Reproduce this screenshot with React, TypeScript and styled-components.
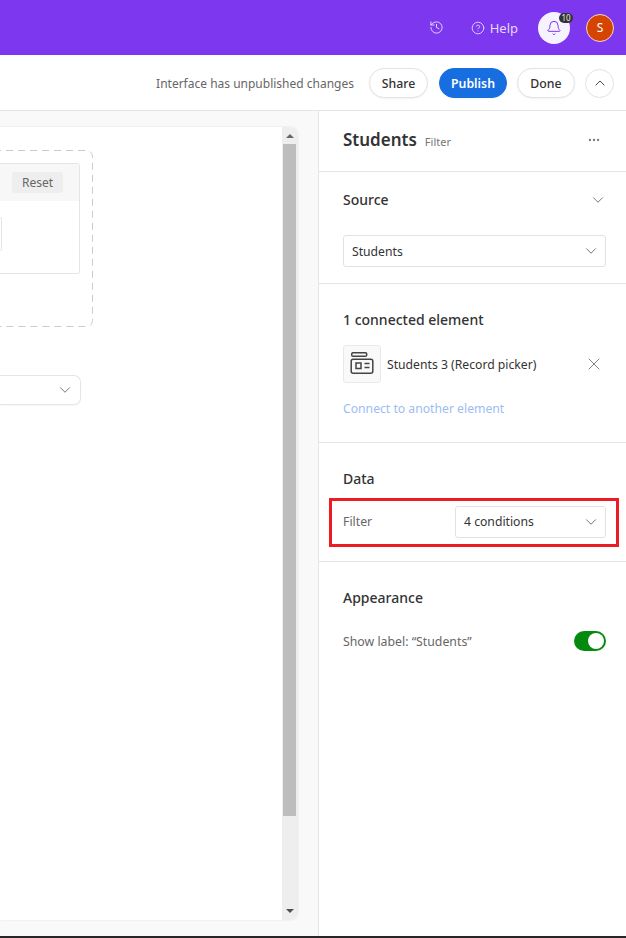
import * as React from 'react'
import styled, { createGlobalStyle } from 'styled-components'
import { Bell, ChevronDown, ChevronUp, CircleHelp, History, MoreHorizontal, X } from 'lucide-react'

const GlobalStyle = createGlobalStyle`
  html, body {
    margin: 0;
    padding: 0;
    overflow: hidden;
    background: #fff;
  }
  body {
    font-family: 'Noto Sans', 'Open Sans', sans-serif;
    color: #333;
  }
`

const Page = styled.div`
  width: 626px;
  height: 938px;
  display: flex;
  flex-direction: column;
  overflow: hidden;
`
const TopBar = styled.header`
  height: 55px;
  flex: none;
  background: #7c37ef;
  display: flex;
  justify-content: flex-end;
  align-items: center;
  padding-right: 12px;
  color: #e6d9fc;
`
const HistoryButton = styled.div`
  display: flex;
  margin-right: 27px;
`
const HelpLink = styled.div`
  display: flex;
  align-items: center;
  gap: 5px;
  font-size: 13px;
  margin-right: 20px;
`
const BellButton = styled.div`
  position: relative;
  width: 32px;
  height: 32px;
  border-radius: 50%;
  background: #f7f2ff;
  color: #7c37ef;
  display: flex;
  align-items: center;
  justify-content: center;
  margin-right: 16px;
`
const Badge = styled.span`
  position: absolute;
  top: 1px;
  right: -3px;
  width: 14px;
  height: 10px;
  border-radius: 5px;
  background: #333;
  color: #eee;
  font-size: 8px;
  line-height: 10px;
  text-align: center;
`
const Avatar = styled.div`
  width: 26px;
  height: 26px;
  border-radius: 50%;
  border: 1px solid #f3d9cc;
  background: #d54401;
  color: #fff;
  font-size: 12px;
  display: flex;
  align-items: center;
  justify-content: center;
`
const Toolbar = styled.div`
  height: 56px;
  flex: none;
  box-sizing: border-box;
  border-bottom: 1px solid #e5e5e5;
  display: flex;
  justify-content: flex-end;
  align-items: center;
  padding: 1px 12px 0 0;
`
const Notice = styled.span`
  font-size: 12px;
  color: #666;
  margin-right: 15px;
`
const PillButton = styled.button<{ $primary?: boolean; $width: number; $gap: number }>`
  width: ${p => p.$width}px;
  height: 30px;
  padding: 0;
  border-radius: 15px;
  border: 1px solid ${p => (p.$primary ? '#166ee1' : '#e2e2e2')};
  background: ${p => (p.$primary ? '#166ee1' : '#fff')};
  color: ${p => (p.$primary ? '#fff' : '#333')};
  font-family: inherit;
  font-size: 12.3px;
  font-weight: ${p => (p.$primary ? 600 : 500)};
  margin-right: ${p => p.$gap}px;
  box-shadow: 0 1px 2px rgba(0, 0, 0, 0.05);
`
const CircleButton = styled.button`
  width: 29px;
  height: 29px;
  padding: 0;
  border-radius: 50%;
  border: 1px solid #e2e2e2;
  background: #fff;
  color: #444;
  display: flex;
  align-items: center;
  justify-content: center;
`
const Workspace = styled.div`
  flex: 1;
  min-height: 0;
  display: flex;
`
const Canvas = styled.main`
  width: 318px;
  flex: none;
  box-sizing: border-box;
  background: #f9f9f9;
  padding: 16px 20px 16px 0;
  display: flex;
  flex-direction: column;
`
const Sheet = styled.div`
  height: 793px;
  background: #fff;
  border-radius: 0 8px 8px 0;
  box-shadow: 0 0 2px rgba(0, 0, 0, 0.12);
  display: flex;
  overflow: hidden;
`
const SheetBody = styled.div`
  flex: 1;
  min-width: 0;
  padding-top: 23px;
`
const DropZone = styled.div`
  position: relative;
  width: 93px;
  height: 177px;
  box-sizing: border-box;
  padding: 13px 13px 0 0;
`
const DashedOutline = styled.svg`
  position: absolute;
  top: 0;
  left: 0;
  width: 93px;
  height: 177px;
`
const FilterCard = styled.div`
  height: 111px;
  box-sizing: border-box;
  background: #fff;
  border: 1px solid #e5e5e5;
  border-left: none;
  border-radius: 0 3px 3px 0;
`
const CardHead = styled.div`
  height: 37px;
  background: #f7f7f7;
  display: flex;
  justify-content: flex-end;
  align-items: center;
  padding-right: 16px;
`
const ResetButton = styled.div`
  width: 51px;
  height: 21px;
  border-radius: 3px;
  background: #eeeeee;
  color: #666;
  font-size: 12px;
  line-height: 21px;
  text-align: center;
`
const CardInput = styled.div`
  width: 1px;
  height: 32px;
  margin-top: 16px;
  border: 1px solid #e5e5e5;
  border-left: none;
  border-radius: 0 2px 2px 0;
`
const PickerStub = styled.div`
  width: 81px;
  height: 30px;
  box-sizing: border-box;
  margin-top: 48px;
  border: 1px solid #e5e5e5;
  border-left: none;
  border-radius: 0 7px 7px 0;
  box-shadow: 0 1px 2px rgba(0, 0, 0, 0.04);
  display: flex;
  justify-content: flex-end;
  align-items: center;
  padding-right: 6px;
  color: #666;
`
const Scrollbar = styled.div`
  width: 16px;
  flex: none;
  box-sizing: border-box;
  padding-right: 1px;
  background: #eeeeee;
  display: flex;
  flex-direction: column;
  align-items: center;
`
const ArrowUp = styled.div`
  flex: none;
  margin: 7px 0 6px;
  width: 0;
  height: 0;
  border-left: 4px solid transparent;
  border-right: 4px solid transparent;
  border-bottom: 4px solid #666;
`
const ArrowDown = styled.div`
  flex: none;
  margin: 93px 0 0;
  width: 0;
  height: 0;
  border-left: 4px solid transparent;
  border-right: 4px solid transparent;
  border-top: 4px solid #505050;
`
const Thumb = styled.div`
  width: 13px;
  height: 672px;
  flex: none;
  background: #bdbdbd;
`
const Panel = styled.aside`
  flex: 1;
  min-width: 0;
  border-left: 1px solid #e5e5e5;
  display: flex;
  flex-direction: column;
`
const Section = styled.section<{ $height: number }>`
  height: ${p => p.$height}px;
  flex: none;
  box-sizing: border-box;
  padding: 0 20px 0 24px;
  border-bottom: 1px solid #e5e5e5;
`
const LastSection = styled.section`
  flex: 1;
  padding: 0 20px 0 24px;
`
const PanelHead = styled.div`
  display: flex;
  align-items: baseline;
  padding-top: 17px;
`
const PanelTitle = styled.h1`
  margin: 0;
  font-size: 17px;
  line-height: 24px;
  font-weight: 600;
  color: #333;
`
const PanelKind = styled.span`
  margin-left: 8px;
  font-size: 11px;
  color: #777;
  flex: 1;
`
const MoreIcon = styled.span`
  align-self: center;
  display: flex;
  color: #777;
  margin-right: 5px;
`
const SectionRow = styled.div<{ $top: number }>`
  display: flex;
  align-items: center;
  justify-content: space-between;
  padding-top: ${p => p.$top}px;
`
const SectionTitle = styled.h2`
  margin: 0;
  font-size: 14px;
  line-height: 22px;
  font-weight: 500;
  color: #333;
`
const Select = styled.div<{ $width?: number }>`
  width: ${p => (p.$width ? `${p.$width}px` : 'auto')};
  height: 32px;
  box-sizing: border-box;
  background: #fff;
  border: 1px solid #e2e2e2;
  border-radius: 3px;
  padding: 0 5px 0 8px;
  display: flex;
  justify-content: space-between;
  align-items: center;
  font-size: 12.2px;
  color: #333;
`
const SourceSelect = styled(Select)`
  margin-top: 24px;
`
const SelectArrow = styled.span`
  display: flex;
  color: #666;
`
const SourceToggle = styled(SelectArrow)`
  margin-right: -1px;
`
const ElementRow = styled.div`
  display: flex;
  align-items: center;
  margin-top: 14px;
`
const ElementIcon = styled.div`
  width: 38px;
  height: 38px;
  box-sizing: border-box;
  border: 1px solid #e8e8e8;
  border-radius: 3px;
  background: #f9f9f9;
  display: flex;
  align-items: center;
  justify-content: center;
`
const ElementName = styled.span`
  margin-left: 6px;
  flex: 1;
  font-size: 12.2px;
  color: #333;
`
const RemoveIcon = styled.span`
  display: flex;
  color: #666;
  margin-right: 2px;
`
const ConnectLink = styled.div`
  margin-top: 17px;
  font-size: 12.2px;
  color: #9cbdf2;
`
const FilterRow = styled.div`
  margin: 8px -13px 0 -14px;
  height: 49px;
  box-sizing: border-box;
  border: 3px solid #ed1c24;
  display: flex;
  align-items: center;
  justify-content: space-between;
  padding: 0 10px 2px 11px;
`
const FieldLabel = styled.span`
  font-size: 12.3px;
  color: #666;
`
const ToggleRow = styled.div`
  display: flex;
  align-items: center;
  justify-content: space-between;
  margin-top: 22px;
`
const Toggle = styled.div`
  width: 32px;
  height: 20px;
  box-sizing: border-box;
  border-radius: 10px;
  background: #048a0e;
  padding: 2px;
  display: flex;
  justify-content: flex-end;
`
const Knob = styled.div`
  width: 16px;
  height: 16px;
  border-radius: 50%;
  background: #fff;
`
const BottomEdge = styled.div`
  height: 2px;
  flex: none;
  background: #2b2426;
`

const RecordPickerIcon = () => (
  <svg width="24" height="24" viewBox="0 0 24 24" fill="none" stroke="#444" strokeWidth="1.5">
    <rect x="1.7" y="0.7" width="15" height="3.6" rx="1.4" />
    <rect x="1.2" y="7.2" width="21.6" height="14" rx="2" />
    <rect x="6" y="11" width="5" height="5.5" />
    <path d="M14.5 11.5h5M14.5 15.5h5" />
  </svg>
)

const Chevron = () => <ChevronDown size={18} strokeWidth={1.2} />

export default function App() {
  return (
    <Page>
      <GlobalStyle />
      <TopBar>
        <HistoryButton>
          <History size={15} strokeWidth={1.6} />
        </HistoryButton>
        <HelpLink>
          <CircleHelp size={14} strokeWidth={1.5} />
          Help
        </HelpLink>
        <BellButton>
          <Bell size={16} strokeWidth={1.5} />
          <Badge>10</Badge>
        </BellButton>
        <Avatar>S</Avatar>
      </TopBar>
      <Toolbar>
        <Notice>Interface has unpublished changes</Notice>
        <PillButton $width={59} $gap={11}>Share</PillButton>
        <PillButton $primary $width={68} $gap={10}>Publish</PillButton>
        <PillButton $width={58} $gap={10}>Done</PillButton>
        <CircleButton>
          <ChevronUp size={16} strokeWidth={1.5} />
        </CircleButton>
      </Toolbar>
      <Workspace>
        <Canvas>
          <Sheet>
            <SheetBody>
              <DropZone>
                <DashedOutline viewBox="0 0 93 177" fill="none">
                  <rect x="-12" y="0.5" width="104.5" height="176" rx="6" stroke="#cbcbcb" strokeDasharray="7 5" />
                </DashedOutline>
                <FilterCard>
                  <CardHead>
                    <ResetButton>Reset</ResetButton>
                  </CardHead>
                  <CardInput />
                </FilterCard>
              </DropZone>
              <PickerStub>
                <Chevron />
              </PickerStub>
            </SheetBody>
            <Scrollbar>
              <ArrowUp />
              <Thumb />
              <ArrowDown />
            </Scrollbar>
          </Sheet>
        </Canvas>
        <Panel>
          <Section $height={61}>
            <PanelHead>
              <PanelTitle>Students</PanelTitle>
              <PanelKind>Filter</PanelKind>
              <MoreIcon>
                <MoreHorizontal size={14} />
              </MoreIcon>
            </PanelHead>
          </Section>
          <Section $height={112}>
            <SectionRow $top={17}>
              <SectionTitle>Source</SectionTitle>
              <SourceToggle>
                <Chevron />
              </SourceToggle>
            </SectionRow>
            <SourceSelect>
              Students
              <SelectArrow>
                <Chevron />
              </SelectArrow>
            </SourceSelect>
          </Section>
          <Section $height={159}>
            <SectionRow $top={25}>
              <SectionTitle>1 connected element</SectionTitle>
            </SectionRow>
            <ElementRow>
              <ElementIcon>
                <RecordPickerIcon />
              </ElementIcon>
              <ElementName>Students 3 (Record picker)</ElementName>
              <RemoveIcon>
                <X size={20} strokeWidth={1} />
              </RemoveIcon>
            </ElementRow>
            <ConnectLink>Connect to another element</ConnectLink>
          </Section>
          <Section $height={119}>
            <SectionRow $top={25}>
              <SectionTitle>Data</SectionTitle>
            </SectionRow>
            <FilterRow>
              <FieldLabel>Filter</FieldLabel>
              <Select $width={151}>
                4 conditions
                <SelectArrow>
                  <Chevron />
                </SelectArrow>
              </Select>
            </FilterRow>
          </Section>
          <LastSection>
            <SectionRow $top={25}>
              <SectionTitle>Appearance</SectionTitle>
            </SectionRow>
            <ToggleRow>
              <FieldLabel>Show label: “Students”</FieldLabel>
              <Toggle>
                <Knob />
              </Toggle>
            </ToggleRow>
          </LastSection>
        </Panel>
      </Workspace>
      <BottomEdge />
    </Page>
  )
}
